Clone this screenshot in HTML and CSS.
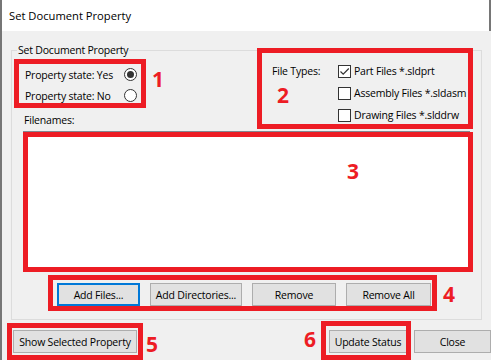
FILE: index.html
```html
<!DOCTYPE html>
<html lang="en">
<head>
    <meta charset="UTF-8">
    <title>Set Document Property</title>
    <link rel="stylesheet" href="styles.css">
</head>
<body>

    <div class="window">
        <!-- Title bar -->
        <div class="titlebar">Set Document Property</div>

        <!-- Main group -->
        <fieldset class="group">
            <legend>Set Document Property</legend>
            <div class="group-body">
                <div class="options">
                    <div class="state-col">
                        <label class="radio-row"><span class="radio-text">Property state: Yes</span><span class="radio checked"></span></label>
                        <label class="radio-row"><span class="radio-text">Property state: No</span><span class="radio"></span></label>
                        <div class="filenames-label">Filenames:</div>
                    </div>
                    <div class="types">
                        <div class="types-label">File Types:</div>
                        <div class="type-list">
                            <label class="check-row">
                                <span class="check">
                                    <svg width="11" height="11" viewBox="0 0 11 11"><path d="M1.5 5.5 L4.2 8.2 L9.8 2.5" fill="none" stroke="#333" stroke-width="1.2"/></svg>
                                </span>
                                Part Files *.sldprt
                            </label>
                            <label class="check-row"><span class="check"></span>Assembly Files *.sldasm</label>
                            <label class="check-row"><span class="check"></span>Drawing Files *.slddrw</label>
                        </div>
                    </div>
                </div>

                <div class="file-list"></div>

                <div class="list-buttons">
                    <button class="btn focused btn-add">Add Files...</button>
                    <button class="btn btn-dirs">Add Directories...</button>
                    <button class="btn btn-remove">Remove</button>
                    <button class="btn btn-remove-all">Remove All</button>
                </div>
            </div>
        </fieldset>

        <!-- Bottom buttons -->
        <div class="footer">
            <button class="btn btn-show">Show Selected Property</button>
            <div class="footer-right">
                <button class="btn btn-update">Update Status</button>
                <button class="btn btn-close">Close</button>
            </div>
        </div>

        <!-- Red annotation marks -->
        <div class="mark mark-1"></div>
        <div class="mark mark-2"></div>
        <div class="mark mark-3"></div>
        <div class="mark mark-4"></div>
        <div class="mark mark-5"></div>
        <div class="mark mark-6"></div>
        <span class="num num-1">1</span>
        <span class="num num-2">2</span>
        <span class="num num-3">3</span>
        <span class="num num-4">4</span>
        <span class="num num-5">5</span>
        <span class="num num-6">6</span>
    </div>

</body>
</html>
```

FILE: styles.css
```css
/* Page */
body {
    margin: 0;
    background-color: #767676;
    font-family: "Open Sans", "Noto Sans", sans-serif;
    font-size: 10.5px;
    letter-spacing: -0.2px;
    color: #000;
}

.window {
    position: relative;
    margin-left: 2px;
    width: 489px;
    height: 360px;
    background-color: #f0f0f0;
    overflow: hidden;
}

/* Title bar */
.titlebar {
    height: 31px;
    line-height: 31px;
    padding-left: 7px;
    background-color: #fff;
    border-right: 2px solid #767676;
    font-size: 11.2px;
    letter-spacing: 0;
}

/* Group box */
.group {
    margin: 12px 0 0 9px;
    padding: 0;
    width: 471px;
    box-sizing: border-box;
    border: 1px solid #dcdcdc;
}

.group legend {
    margin-left: 5px;
    padding: 0 1px;
    line-height: 14px;
}

.group-body {
    padding: 0 11px 13px;
}

.options {
    display: flex;
}

.state-col {
    flex: 0 0 247px;
    padding: 7px 0 0 2px;
}

.radio-row {
    display: flex;
    align-items: center;
    height: 21px;
}

.radio-text {
    width: 99px;
}

.radio {
    width: 13px;
    height: 13px;
    box-sizing: border-box;
    border: 1px solid #333;
    border-radius: 50%;
    background-color: #fff;
    display: flex;
    align-items: center;
    justify-content: center;
}

.radio.checked::after {
    content: "";
    width: 7px;
    height: 7px;
    border-radius: 50%;
    background-color: #333;
}

.filenames-label {
    margin: 7px 0 0 -1px;
    line-height: 14px;
}

.types {
    display: flex;
    padding-top: 3px;
}

.types-label {
    width: 66px;
    line-height: 22px;
}

.check-row {
    display: flex;
    align-items: center;
    height: 22px;
}

.check {
    width: 13px;
    height: 13px;
    box-sizing: border-box;
    border: 1px solid #333;
    background-color: #fff;
    margin-right: 3px;
    display: flex;
    align-items: center;
    justify-content: center;
}

/* File list */
.file-list {
    margin-top: 4px;
    height: 140px;
    box-sizing: border-box;
    border: 1px solid #828790;
    background-color: #fff;
}

.list-buttons {
    display: flex;
    gap: 10px;
    margin-top: 12px;
    padding-left: 34px;
}

/* Buttons */
.btn {
    height: 23px;
    padding: 0;
    box-sizing: border-box;
    border: 1px solid #adadad;
    background-color: #e1e1e1;
    font-family: inherit;
    font-size: inherit;
    letter-spacing: inherit;
    color: #000;
}

.btn.focused {
    border: 2px solid #0078d7;
}

.btn-add { width: 83px; }
.btn-dirs { width: 92px; }
.btn-remove { width: 84px; }
.btn-remove-all { width: 85px; }
.btn-show { width: 124px; }
.btn-update { width: 78px; }
.btn-close { width: 77px; }

/* Footer */
.footer {
    display: flex;
    justify-content: space-between;
    margin-top: 10px;
    padding: 0 0 0 11px;
}

.footer-right {
    display: flex;
    gap: 7px;
}

/* Annotations */
.mark {
    position: absolute;
    border: 5px solid #ed1c24;
    box-sizing: border-box;
}

.mark-1 { left: 12px; top: 59px; width: 132px; height: 49px; }
.mark-2 { left: 255px; top: 48px; width: 216px; height: 81px; }
.mark-3 { left: 21px; top: 132px; width: 450px; height: 140px; }
.mark-4 { left: 46px; top: 275px; width: 389px; height: 36px; }
.mark-5 { left: 5px; top: 323px; width: 136px; height: 37px; }
.mark-6 { left: 319px; top: 321px; width: 90px; height: 39px; }

.num {
    position: absolute;
    width: 12px;
    text-align: center;
    font-family: "Open Sans", sans-serif;
    font-weight: bold;
    font-size: 21px;
    line-height: 21px;
    letter-spacing: 0;
    color: #ed1c24;
}

.num-1 { left: 150px; top: 69px; }
.num-2 { left: 275px; top: 85px; }
.num-3 { left: 345px; top: 161px; }
.num-4 { left: 441px; top: 284px; }
.num-5 { left: 144px; top: 334px; }
.num-6 { left: 302px; top: 329px; }
```
